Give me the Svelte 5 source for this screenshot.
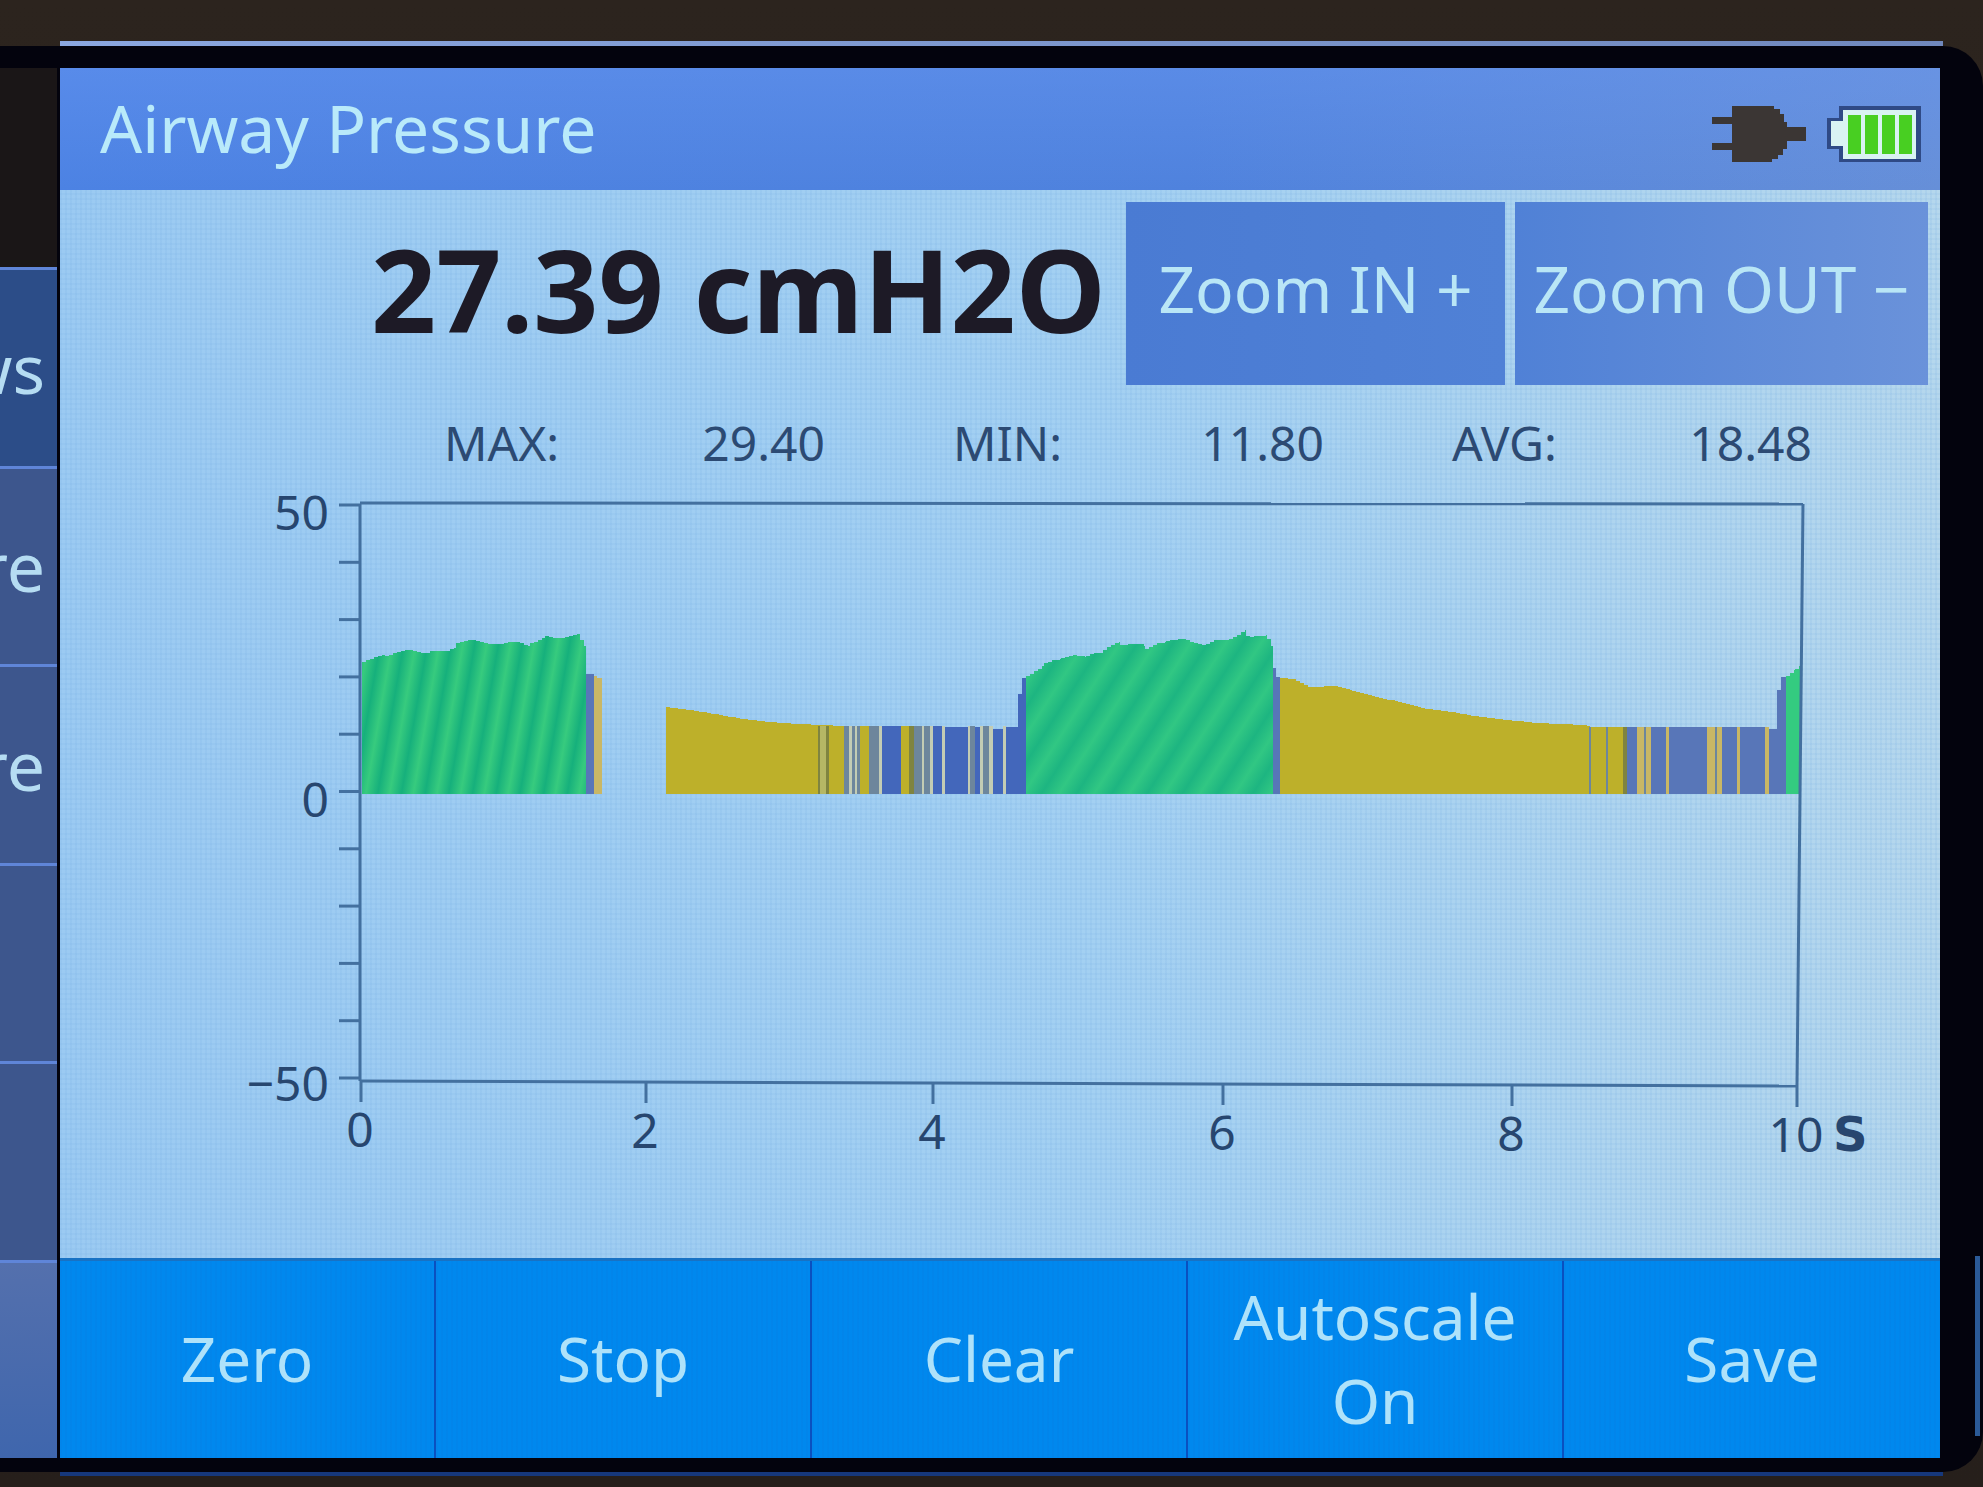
<script>
  const menu = ['ws', 're', 're', '', '', ''];
  const stats = [
    { label: 'MAX:', value: '29.40' },
    { label: 'MIN:', value: '11.80' },
    { label: 'AVG:', value: '18.48' },
  ];
  const actions = ['Zero', 'Stop', 'Clear', 'Autoscale On', 'Save'];

  // Drawing units of the chart
  const base = 314;
  const yTicks = Array.from({ length: 11 }, (_, i) => 25 + i * 57.3);
  const yLabels = [
    { text: '50', y: 50 },
    { text: '0', y: 337 },
    { text: '−50', y: 621 },
  ];
  const xTicks = [
    { text: '0', x: 301, y: 601 },
    { text: '2', x: 586, y: 602 },
    { text: '4', x: 873, y: 603 },
    { text: '6', x: 1163, y: 604 },
    { text: '8', x: 1452, y: 605 },
    { text: '10', x: 1737, y: 606 },
  ];

  // Adds a small ragged edge to a line of [x, top] points
  function area(points, rough, step = 4) {
    let d = `M${points[0][0]} ${base}`;
    for (let i = 0; i < points.length - 1; i++) {
      const [x0, y0] = points[i];
      const [x1, y1] = points[i + 1];
      for (let x = x0; x < x1; x += step) {
        const k = (x - x0) / (x1 - x0);
        const n = rough * Math.sin(x * 2.3) * Math.cos(x * 0.7);
        const y = Math.round(y0 + (y1 - y0) * k + n);
        d += `V${y}H${Math.min(x + step, x1)}`;
      }
    }
    return d + `V${base}Z`;
  }

  const greens = [
    { fill: 'url(#green-a)', d: area([[302, 181], [325, 176], [370, 171], [396, 164], [440, 162], [470, 164], [485, 157], [520, 157], [526, 166]], 4) },
    { fill: 'url(#green-b)', d: area([[966, 194], [984, 186], [1001, 180], [1026, 175], [1043, 171], [1060, 165], [1085, 166], [1106, 162], [1142, 165], [1157, 161], [1173, 158], [1186, 154], [1207, 156], [1213, 166]], 4) },
    { fill: '#34cb80', d: area([[1726, 196], [1735, 189], [1741, 185]], 0) },
  ];
  const yellows = [
    area([[606, 227], [635, 231], [664, 236], [689, 240], [719, 243], [757, 245], [785, 246]], 0),
    area([[1220, 198], [1232, 199], [1248, 207], [1274, 206], [1292, 211], [1315, 217], [1338, 222], [1361, 228], [1384, 231], [1407, 235], [1444, 240], [1477, 243], [1523, 245], [1530, 247], [1564, 247]], 0),
  ];

  const tones = { Y: '#bdb02a', D: '#7f8440', M: '#b5b765', B: '#4367bb', C: '#5876b8', G: '#6d869c', L: '#c3ccb4', T: '#c9b765' };
  // [x, width, tone, top]
  const stripes = [
    [526, 8, 'C', 194], [534, 3, 'T', 196], [537, 5, 'T', 198],
    [758, 2, 'D', 246], [760, 6, 'M', 246], [766, 3, 'D', 246], [769, 15, 'Y', 246],
    [784, 5, 'G', 246], [789, 3, 'L', 246], [792, 3, 'G', 246], [795, 2, 'L', 246],
    [797, 3, 'G', 246], [800, 9, 'Y', 246], [809, 10, 'G', 246], [819, 3, 'L', 246],
    [822, 19, 'B', 246], [841, 8, 'Y', 246], [849, 5, 'D', 246], [854, 8, 'G', 246],
    [862, 2, 'L', 246], [864, 6, 'G', 246], [870, 3, 'L', 246], [873, 9, 'B', 246],
    [882, 3, 'L', 246], [885, 23, 'B', 247], [908, 2, 'L', 246], [910, 5, 'G', 246],
    [915, 5, 'B', 247], [920, 3, 'L', 246], [923, 6, 'G', 246], [929, 4, 'L', 246],
    [933, 10, 'B', 249], [943, 3, 'L', 246], [946, 12, 'B', 247], [958, 4, 'B', 214],
    [962, 4, 'B', 198], [1212, 4, 'C', 188], [1216, 4, 'C', 197],
    [1529, 2, 'G', 247], [1546, 2, 'G', 247], [1563, 4, 'D', 247], [1567, 10, 'C', 247],
    [1577, 7, 'T', 247], [1584, 2, 'G', 247], [1586, 5, 'T', 247], [1591, 15, 'C', 247],
    [1606, 3, 'T', 247], [1609, 38, 'C', 247], [1647, 8, 'T', 247], [1655, 2, 'G', 247],
    [1657, 5, 'T', 247], [1662, 15, 'C', 247], [1677, 3, 'T', 247], [1680, 25, 'C', 247],
    [1705, 4, 'T', 247], [1709, 8, 'C', 249], [1717, 4, 'C', 210], [1721, 5, 'C', 197],
  ];
</script>

<div class="device">
  <div class="edge top"></div>
  <div class="bezel">
    <nav class="menu" aria-label="Menu">
      {#each menu as item}
        <button class="entry">{item}</button>
      {/each}
    </nav>

    <main class="screen">
      <header class="titlebar">
        <h1>Airway Pressure</h1>
        <div class="status">
          <svg class="icon" viewBox="0 0 94 56" role="img" aria-label="Plugged in">
            <path d="M0 11h20V0h42v3h6v5h4v8h3v5h19v14H75v8h-4v6h-5v4h-6v3H20V44H0v-7h20V18H0z" fill="#3b3634" />
          </svg>
          <svg class="icon" viewBox="0 0 94 56" role="img" aria-label="Battery full">
            <path d="M12 0h82v56H12V43H0V12h12z" fill="#2f4a86" />
            <path d="M16 4h73v49H16V40H4V15h12z" fill="#d9f3f3" />
            <path d="M21 9h13v39H21zM38 9h13v39H38zM55 9h13v39H55zM72 9h13v39H72z" fill="#48cf22" />
          </svg>
        </div>
      </header>

      <section class="reading">
        <output class="value">27.39 cmH2O</output>
        <button class="zoom">Zoom IN +</button>
        <button class="zoom">Zoom OUT −</button>
      </section>

      <dl class="stats">
        {#each stats as stat}
          <div class="stat">
            <dt>{stat.label}</dt>
            <dd>{stat.value}</dd>
          </div>
        {/each}
      </dl>

      <svg class="chart" viewBox="0 0 1880 778" role="img" aria-label="Airway pressure over 10 seconds">
        <defs>
          <linearGradient id="green-a" gradientUnits="userSpaceOnUse" x1="302" y1="200" x2="325" y2="204" spreadMethod="repeat">
            <stop offset="0" stop-color="#37cb7e" />
            <stop offset="0.5" stop-color="#16b07c" />
            <stop offset="1" stop-color="#37cb7e" />
          </linearGradient>
          <linearGradient id="green-b" gradientUnits="userSpaceOnUse" x1="966" y1="200" x2="991" y2="216" spreadMethod="repeat">
            <stop offset="0" stop-color="#31c783" />
            <stop offset="0.5" stop-color="#1db581" />
            <stop offset="1" stop-color="#31c783" />
          </linearGradient>
        </defs>

        {#each yellows as d}
          <path {d} fill={tones.Y} />
        {/each}
        {#each stripes as [x, width, tone, top]}
          <rect {x} y={top} {width} height={base - top} fill={tones[tone]} />
        {/each}
        {#each greens as shape}
          <path d={shape.d} fill={shape.fill} />
        {/each}

        <g class="axis">
          <path d="M300 24V601" />
          <path d="M300 23L1743 24" />
          <path d="M1743 24L1737 606" />
          <path d="M300 601L1737 606" />
          {#each yTicks as y}
            <path d="M279 {y}H300" />
          {/each}
          {#each xTicks as tick}
            <path d="M{tick.x} {tick.y}v21" />
          {/each}
        </g>
        <g class="labels">
          {#each yLabels as label}
            <text x="269" y={label.y} text-anchor="end">{label.text}</text>
          {/each}
          {#each xTicks as tick}
            <text x={tick.x - 1} y={tick.y + 66} text-anchor="middle">{tick.text}</text>
          {/each}
          <text class="unit" x="1773" y="671">S</text>
        </g>
      </svg>

      <footer class="actions">
        {#each actions as action}
          <button class="action">{action}</button>
        {/each}
      </footer>
    </main>
  </div>
  <div class="edge bottom"></div>
</div>

<style>
  :global(body) {
    margin: 0;
    background: #29211c;
  }

  .device {
    display: flex;
    flex-direction: column;
    box-sizing: border-box;
    min-height: 100vh;
    padding: 41px 0 11px;
    overflow: hidden;
    font-family: 'Noto Sans', 'Open Sans', sans-serif;
    background: linear-gradient(#2c241e, #261f1b);
  }

  .edge {
    margin: 0 40px 0 60px;
  }

  .edge.top {
    height: 5px;
    background: linear-gradient(90deg, #8ba7e0, #7088bd);
  }

  .edge.bottom {
    height: 4px;
    background: #16387c;
  }

  .bezel {
    display: grid;
    grid-template-columns: 57px 1fr;
    column-gap: 3px;
    flex: 1;
    padding: 22px 43px 14px 0;
    border-radius: 0 40px 40px 0;
    background:
      linear-gradient(#2b5a97, #2b5a97) right 3px bottom 36px / 5px 180px no-repeat,
      #03030d;
  }

  button {
    margin: 0;
    padding: 0;
    border: 0;
    border-radius: 0;
    font: inherit;
    color: inherit;
    cursor: pointer;
  }

  .menu {
    display: grid;
    grid-auto-rows: 1fr;
    padding-top: 199px;
    background: #1a1617;
  }

  .entry {
    display: flex;
    justify-content: flex-end;
    align-items: center;
    width: 57px;
    padding-right: 12px;
    border-top: 3px solid #5f85d8;
    overflow: hidden;
    box-sizing: border-box;
    font-size: 68px;
    line-height: 80px;
    color: #b5dcf2;
    background: #3d568d;
  }

  .entry:nth-child(1) {
    background: #2c4d88;
  }

  .entry:nth-child(6) {
    background: linear-gradient(#5470ad, #3f66ad);
  }

  .screen {
    display: flex;
    flex-direction: column;
    min-width: 0;
    background:
      repeating-linear-gradient(90deg, #6fa8e022 0 2px, #fff0 2px 5px),
      repeating-linear-gradient(#6fa8e01c 0 2px, #fff0 2px 5px),
      linear-gradient(90deg, #9bcaf2, #a3d0f2 55%, #b5d7ed);
  }

  .titlebar {
    display: flex;
    justify-content: space-between;
    align-items: center;
    height: 122px;
    padding: 0 19px 0 40px;
    background:
      linear-gradient(#6c9af560, #4a7cdc00),
      linear-gradient(90deg, #4c82e3, #4f82dd 60%, #668fd8);
  }

  h1 {
    margin: 0;
    padding-bottom: 4px;
    font-size: 66px;
    line-height: 112px;
    font-weight: 400;
    color: #b9eafa;
  }

  .status {
    display: flex;
    gap: 21px;
    padding-top: 10px;
  }

  .icon {
    display: block;
    width: 94px;
    height: 56px;
  }

  .reading {
    display: grid;
    grid-template-columns: minmax(0, 1056fr) minmax(0, 379fr) minmax(0, 413fr);
    column-gap: 10px;
    padding: 12px 12px 0 0;
  }

  .value {
    padding-right: 10px;
    font-size: 114px;
    line-height: 174px;
    font-weight: 700;
    text-align: right;
    white-space: nowrap;
    color: #1d1a26;
  }

  .zoom {
    height: 183px;
    padding-bottom: 10px;
    font-size: 64px;
    white-space: nowrap;
    color: #b9e6f6;
    background: linear-gradient(90deg, #4a7bd3, #5081d6);
  }

  .zoom:last-child {
    background: linear-gradient(90deg, #5081d6, #6a92da);
  }

  .stats {
    display: grid;
    grid-template-columns: 381fr 371fr 360fr;
    column-gap: 128px;
    margin: 0;
    padding: 10px 128px 0 384px;
    font-size: 48px;
    line-height: 95px;
    color: #2c4a73;
  }

  .stat {
    display: flex;
    justify-content: space-between;
  }

  dd {
    margin: 0;
  }

  .chart {
    display: block;
    width: 100%;
    height: auto;
    margin-top: -10px;
  }

  .axis path {
    fill: none;
    stroke: #43709f;
    stroke-width: 3px;
  }

  .labels {
    font-size: 48px;
    fill: #27466f;
  }

  .unit {
    font-family: 'DejaVu Sans', sans-serif;
    font-weight: 700;
  }

  .actions {
    display: grid;
    grid-template-columns: repeat(5, 1fr);
    flex: 1;
    min-height: 198px;
    border-top: 3px solid #1872c4;
    box-sizing: border-box;
    background: #0086ec;
  }

  .action {
    border-right: 2px solid #0a50c0;
    padding: 0 20px 4px;
    font-size: 62px;
    line-height: 84px;
    color: #aee2fa;
    background:
      repeating-linear-gradient(90deg, #0a78dc30 0 2px, #fff0 2px 5px),
      #0088ee;
  }

  .action:last-child {
    border-right: 0;
  }
</style>
